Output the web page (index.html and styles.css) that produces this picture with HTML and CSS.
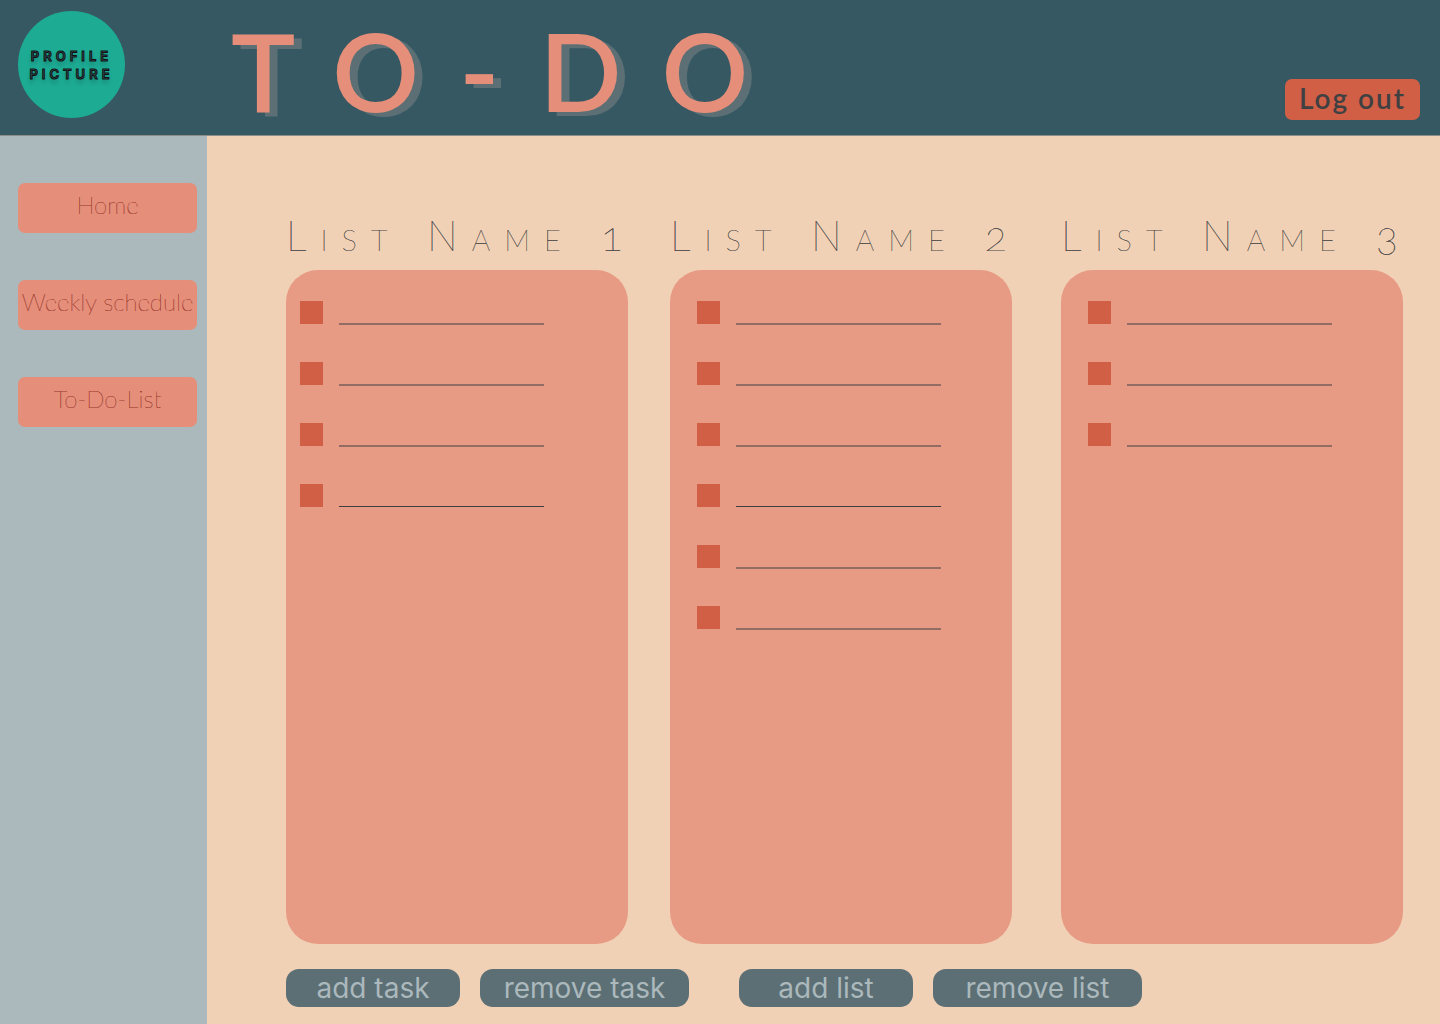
FILE: index.html
```html
<!DOCTYPE html>
<html lang="en">
<head>
<meta charset="utf-8">
<title>To-Do</title>
<link rel="stylesheet" href="styles.css">
</head>
<body>
<header class="header">
  <div class="avatar"><span>PROFILE</span><span>PICTURE</span></div>
  <h1 class="title">TO-DO</h1>
  <button class="logout" type="button">Log out</button>
</header>
<div class="layout">
  <nav class="sidebar">
    <a class="nav-link" href="#home"><span class="nav-text">Home</span></a>
    <a class="nav-link" href="#schedule"><span class="nav-text">Weekly schedule</span></a>
    <a class="nav-link" href="#todo"><span class="nav-text">To-Do-List</span></a>
  </nav>
  <main class="main">
    <div class="lists">
      <section class="list">
        <h2 class="list-name">List Name 1</h2>
        <ul class="card">
          <li class="task"><input class="check" type="checkbox" aria-label="Task 1 done"><input class="entry" type="text" aria-label="Task 1"></li>
          <li class="task"><input class="check" type="checkbox" aria-label="Task 2 done"><input class="entry" type="text" aria-label="Task 2"></li>
          <li class="task"><input class="check" type="checkbox" aria-label="Task 3 done"><input class="entry" type="text" aria-label="Task 3"></li>
          <li class="task"><input class="check" type="checkbox" aria-label="Task 4 done"><input class="entry entry-fine" type="text" aria-label="Task 4"></li>
        </ul>
      </section>
      <section class="list">
        <h2 class="list-name">List Name 2</h2>
        <ul class="card card-inset">
          <li class="task"><input class="check" type="checkbox" aria-label="Task 1 done"><input class="entry" type="text" aria-label="Task 1"></li>
          <li class="task"><input class="check" type="checkbox" aria-label="Task 2 done"><input class="entry" type="text" aria-label="Task 2"></li>
          <li class="task"><input class="check" type="checkbox" aria-label="Task 3 done"><input class="entry" type="text" aria-label="Task 3"></li>
          <li class="task"><input class="check" type="checkbox" aria-label="Task 4 done"><input class="entry entry-fine" type="text" aria-label="Task 4"></li>
          <li class="task"><input class="check" type="checkbox" aria-label="Task 5 done"><input class="entry" type="text" aria-label="Task 5"></li>
          <li class="task"><input class="check" type="checkbox" aria-label="Task 6 done"><input class="entry" type="text" aria-label="Task 6"></li>
        </ul>
      </section>
      <section class="list">
        <h2 class="list-name">List Name 3</h2>
        <ul class="card card-inset">
          <li class="task"><input class="check" type="checkbox" aria-label="Task 1 done"><input class="entry" type="text" aria-label="Task 1"></li>
          <li class="task"><input class="check" type="checkbox" aria-label="Task 2 done"><input class="entry" type="text" aria-label="Task 2"></li>
          <li class="task"><input class="check" type="checkbox" aria-label="Task 3 done"><input class="entry" type="text" aria-label="Task 3"></li>
        </ul>
      </section>
    </div>
    <div class="actions">
      <div class="action-group">
        <button class="action" type="button">add task</button>
        <button class="action action-wide" type="button">remove task</button>
      </div>
      <div class="action-group">
        <button class="action" type="button">add list</button>
        <button class="action action-wide" type="button">remove list</button>
      </div>
    </div>
  </main>
</div>
</body>
</html>
```
FILE: styles.css
```css
* {
  box-sizing: border-box;
}

body {
  margin: 0;
  min-height: 100vh;
  display: flex;
  flex-direction: column;
  background: #f0d1b5;
  font-family: Lato, "Open Sans", sans-serif;
}

/* Header */
.header {
  display: flex;
  align-items: flex-start;
  min-height: 136px;
  padding: 11px 20px 0 18px;
  background: #365863;
  border-bottom: 1px solid #8a8f8e;
}

.avatar {
  width: 107px;
  height: 107px;
  flex: none;
  border-radius: 50%;
  background: #1dab94;
  display: flex;
  flex-direction: column;
  align-items: center;
  justify-content: center;
  font-family: Inter, sans-serif;
  font-size: 13px;
  font-weight: 600;
  line-height: 18px;
  letter-spacing: 4px;
  color: #365863;
  -webkit-text-stroke: 1px #111;
  text-shadow: 0 4px 4px rgba(0, 0, 0, 0.25);
}

.title {
  flex: 1;
  margin: 0 0 0 106px;
  font-size: 108px;
  font-weight: 600;
  line-height: 118px;
  letter-spacing: 40px;
  color: #e58e79;
  text-shadow: 8px 4px 0 #5b6f75;
}

.logout {
  width: 135px;
  height: 41px;
  margin-top: 68px;
  padding: 0 0 4px;
  border: 0;
  border-radius: 7px;
  background: #d05f46;
  color: #3f4042;
  font: 600 28px/36px Lato, sans-serif;
  letter-spacing: 2px;
}

/* Page body */
.layout {
  flex: 1;
  display: flex;
}

.sidebar {
  width: 207px;
  flex: none;
  display: flex;
  flex-direction: column;
  gap: 47px;
  padding: 47px 10px 0 18px;
  background: #abb8bc;
}

.nav-link {
  height: 50px;
  border-radius: 7px;
  background: #e58e79;
  color: #98352d;
  font-size: 24px;
  font-weight: 200;
  line-height: 44px;
  text-align: center;
  text-decoration: none;
  white-space: nowrap;
}

.nav-text {
  display: block;
  opacity: 0.9;
  text-shadow: 0 0 currentColor, 0 0 currentColor;
}

.main {
  flex: 1;
  min-width: 0;
  display: flex;
  flex-direction: column;
  padding: 76px 37px 17px 79px;
}

/* Lists */
.lists {
  flex: 1;
  display: grid;
  grid-template-columns: 384fr 391fr 342fr;
}

.list {
  display: flex;
  flex-direction: column;
  min-width: 0;
  padding-right: 42px;
}

.list:nth-child(2) {
  padding-right: 49px;
}

.list:last-child {
  padding-right: 0;
}

.list-name {
  margin: 0 0 10px;
  font-size: 41px;
  font-weight: 200;
  font-variant-caps: small-caps;
  font-variant-numeric: oldstyle-nums;
  line-height: 48px;
  letter-spacing: 14px;
  opacity: 0.9;
  text-shadow: 0 0 currentColor, 0 0 currentColor;
  white-space: nowrap;
  color: #3f4042;
}

.card {
  flex: 1;
  display: flex;
  flex-direction: column;
  gap: 37px;
  margin: 0;
  padding: 31px 14px;
  list-style: none;
  border-radius: 32px;
  background: #e79b84;
}

.card-inset {
  padding-left: 27px;
}

.task {
  display: flex;
  gap: 16px;
  height: 24px;
}

.check {
  appearance: none;
  width: 23px;
  height: 23px;
  flex: none;
  margin: 0;
  background: #d05f46;
}

.entry {
  width: 205px;
  padding: 0;
  border: 0;
  border-bottom: 2px solid #936d64;
  background: none;
  color: #3f4042;
  font: 16px Lato, sans-serif;
}

.entry-fine {
  height: 23px;
  border-bottom: 1px solid #3f4042;
}

/* Actions */
.actions {
  display: flex;
  gap: 50px;
  margin-top: 25px;
}

.action-group {
  display: flex;
  gap: 20px;
}

.action {
  width: 174px;
  height: 38px;
  padding: 0;
  border: 0;
  border-radius: 13px;
  background: #5b6f75;
  color: #abb8bc;
  font: 400 28px/38px Inter, sans-serif;
}

.action-wide {
  width: 209px;
}
```
